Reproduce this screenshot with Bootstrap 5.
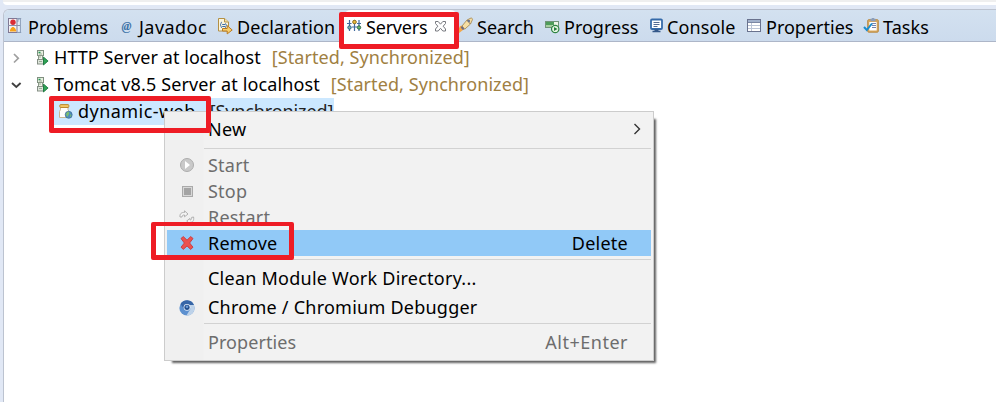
<!DOCTYPE html>
<html lang="en">
<head>
<meta charset="utf-8">
<title>Servers</title>
<link rel="stylesheet" href="https://cdn.jsdelivr.net/npm/bootstrap@5.3.0/dist/css/bootstrap.min.css">
<style>
html,body{height:402px;overflow:hidden}
body{background:#e1e8f5;font-family:"Noto Sans","Open Sans",sans-serif;font-size:18px;line-height:26px;color:#000}
svg{flex:none;overflow:visible}
.topstrip{height:5px;background:linear-gradient(#efefef 0 2px,#fff 2px 5px);margin-left:3px;border-bottom-left-radius:4px}
.view{margin:4px 0 0 3px;height:393px;border:1px solid #bcc3d0;border-right:0;border-bottom:0;border-top-left-radius:6px;background:#fff;overflow:hidden}
.tabs{height:32px;background:linear-gradient(#d3e1f0,#ccdbed);border-bottom:1px solid #adb6c8;padding-left:5px}
.tab-item{flex:none;height:31px;padding-top:4px;white-space:nowrap}
.tab-item>svg:first-child{margin:4px 3px 0 0}
.w1{width:111px}.w2{width:98px;letter-spacing:.45px}.w3{width:125px;letter-spacing:.1px}
.w4{width:115px;background:#fff;border-radius:8px 8px 0 0;padding-left:4px;height:32px;letter-spacing:-.2px}
.w5{width:87px}.w6{width:103px}.w7{width:99px;letter-spacing:.1px}.w8{width:117px}.w9{letter-spacing:.1px}
.close-x{margin:7px 0 0 8px}
.tree{padding:2px 0 0 8px}
.node{height:27px;line-height:27px;white-space:nowrap}
.state{color:#a08042;margin-left:11px;letter-spacing:.08px}
.srv{margin:0 5px 0 16px}
.http-name{letter-spacing:.05px}
.tomcat-name{letter-spacing:.13px}
.jar{margin:0 3px 0 5px}
.picked{background:#cce8ff;margin-left:42px;width:280px}
.picked .label-txt{letter-spacing:.45px}
.picked .state{color:#222;margin-left:14px;letter-spacing:-.12px}
.popup{left:164px;top:111px;width:490px;height:250px;border:1px solid #ccc;background:linear-gradient(90deg,#f0f0f0 38px,#f2f2f2 39px);box-shadow:5px 5px 2px -3px rgba(0,0,0,.62);padding:4px 2px 0;letter-spacing:.24px}
.entry{height:26px;padding:0 23px 0 12px;white-space:nowrap}
.entry .slot{width:16px;margin-right:13px;height:16px}
.has-sub{padding-right:10px}
.tall{height:29px;line-height:29px}
.off{color:#6d6d6d}
.hot{background:#91c9f7}
.prop-name{letter-spacing:.08px}
.keys{letter-spacing:.5px}
.rule{height:1px;background:#d2d2d2;margin-left:37px}
.r1{margin-top:6px;margin-bottom:3px}.r2{margin-top:3px;margin-bottom:4px}.r3{margin-top:1px;margin-bottom:4px}
.frame-red{border:5px solid #ee1c25;border-radius:2px}
.f1{left:339px;top:12px;width:120px;height:37px}
.f2{left:49px;top:96px;width:162px;height:37px}
.f3{left:151px;top:222px;width:143px;height:38px;border-top-width:4px}
</style>
<script src="https://cdn.jsdelivr.net/npm/bootstrap@5.3.0/dist/js/bootstrap.bundle.min.js"></script>
</head>
<body class="position-relative">
<svg width="0" height="0" class="position-absolute"><defs>
<symbol id="server" viewBox="0 0 13 16"><rect x="1.5" y=".5" width="6" height="5" fill="#e8efe0" stroke="#7f8f7f"/><rect x="2.5" y="5.5" width="4" height="4" fill="#eef2e6" stroke="#8b9a88"/><rect x="1.5" y="9.5" width="6" height="4.5" fill="#dfe5dc" stroke="#858f85"/><path d="M2.5 2.5h2" stroke="#1f9a55" stroke-width="1.5"/><path d="M3 4h3M3 7h2M3 11.5h3" stroke="#9cac98"/><path d="M7.5 7v8l4.6-4z" fill="#2fa354" stroke="#147238" stroke-width=".8"/></symbol>
</defs></svg>
<div class="topstrip"></div>
<main class="view">
  <nav class="tabs d-flex">
    <div class="tab-item d-flex w1"><svg width="16" height="16"><rect x="-.5" y=".5" width="8.5" height="14" fill="#f4f1f4" stroke="#817894"/><path d="M8 .5h4.2M8 14.5h4.2M8.8 4c0-2 .5-2.8 2.6-3.4v13.8H8.8" fill="#e5edf6" stroke="#8b9db8"/><path d="M-1 7.5h12" stroke="#8990a8"/><circle cx="4" cy="4.2" r="2.7" fill="#da2c35"/><path d="M.8 13.5c0-2 1.5-4.5 3.2-4.5s3.2 2.5 3.2 4.5z" fill="#f5a21b"/></svg><span>Problems</span></div>
    <div class="tab-item d-flex w2"><svg width="16" height="16"><text x="1.5" y="12" font-family="Liberation Serif,serif" font-style="italic" font-weight="bold" font-size="12" fill="#3d73a8" letter-spacing="0">@</text></svg><span>Javadoc</span></div>
    <div class="tab-item d-flex w3"><svg width="16" height="16"><path d="M.5.5h6l4 3.5v9h-10z" fill="#fbf5dd" stroke="#b39045"/><path d="M6.5.5v3.5h4" fill="#f3e1a8" stroke="#b39045"/><path d="M4 4c-1.4 0-.5 2.5-2 2.8 1.5.3.6 3 2 3M7 5.5c1.3 0 .4 1.5 1.6 1.7-1.2.2-.3 2.6-1.6 2.6M4.2 6.5h3M4.2 8.5h3" fill="none" stroke="#3c6da8"/><path d="M4.5 10.5h4.7V7.6l5 4.4-5 3.9V13H4.5z" fill="#f8cf6d" stroke="#b97a22"/></svg><span>Declaration</span></div>
    <div class="tab-item d-flex w4"><svg width="16" height="16"><path d="M2.5 2v11M7.5 2v11M12 2v11M0 5.5h4.5M5 9h5M10 5.5h4" fill="none" stroke="#416b9e" stroke-width="1.2"/><circle cx="2.5" cy="9.5" r="1.7" fill="#82b8a0" stroke="#275f8a"/><circle cx="7.5" cy="4" r="1.8" fill="#eebd3b" stroke="#8f711c"/><circle cx="12" cy="9.5" r="1.7" fill="#6dbb64" stroke="#2c6c50"/></svg><span>Servers</span><svg width="11" height="11" viewBox="0 0 11 11" class="close-x"><path d="M.5.5h2.7l2.3 2.7L7.8.5h2.7v2L8.2 5.2l2.3 2.8v2H7.8L5.5 7.3 3.2 10H.5V8l2.3-2.8L.5 2.5z" fill="#fff" stroke="#77797f"/></svg></div>
    <div class="tab-item d-flex w5"><svg width="16" height="16"><path d="M2 8l3.5-.5 2 2.5-2.5 2-4.6 3.5C1 13-.5 13 2 8z" fill="#f2a84b"/><path d="M4 8L9 2l4-2c1 0 1.7.8 1.4 1.8L12.5 6l-5.8 5.2z" fill="#f6dea3" stroke="#a98d58" stroke-width=".9"/><path d="M4 8l2.5 3-1.6 1-2.3-2.5z" fill="#6c6b86"/><path d="M9 2l3.3 4" stroke="#8c7a62"/><circle cx="10.8" cy="3" r="1.3" fill="#6e7489"/></svg><span>Search</span></div>
    <div class="tab-item d-flex w6"><svg width="16" height="16"><rect x=".5" y="3.5" width="13" height="6" fill="#eef6e8" stroke="#719479"/><path d="M1 4h8v3H1z" fill="#4e9c5a"/><path d="M1 7h6v2H1z" fill="#a5cf9e"/><circle cx="10.2" cy="11" r="3.7" fill="#e7f5e3" stroke="#2f8443" stroke-width="1.2"/><path d="M9 8.9v4.2l3.5-2.1z" fill="#26803d"/></svg><span>Progress</span></div>
    <div class="tab-item d-flex w7"><svg width="16" height="16"><rect x="3" y="1.5" width="11" height="9.5" rx="1" fill="#fff" stroke="#356aa9" stroke-width="1.8"/><path d="M5.5 4.5h6M5.5 6.5h6M5.5 8.5h4" stroke="#526a93"/><path d="M6.5 12h4M4.5 13.5h8" stroke="#345889" stroke-width="1.4"/></svg><span>Console</span></div>
    <div class="tab-item d-flex w8"><svg width="16" height="16"><rect x=".5" y="1.5" width="13" height="12" fill="#fff" stroke="#69728e"/><path d="M1 2h12v2H1z" fill="#a1b1cc"/><path d="M4.5 4v9M1 7.5h12M1 10.5h12" stroke="#bbc5d7"/><path d="M1 4.5h12" stroke="#7b87a3"/></svg><span>Properties</span></div>
    <div class="tab-item d-flex w9"><svg width="16" height="16"><rect x="3.7" y="1.7" width="10.6" height="12.5" rx="1" fill="#d8a85e" stroke="#b98b47"/><path d="M5.3 4h7.4v8.6H5.3z" fill="#fff"/><path d="M6.5.8h1.3V0h2.4v.8h1.3v2.5h-5z" fill="#8c9eb9"/><path d="M8 5.5h4M8 7.5h4M8 9.5h4" stroke="#7685ad"/><path d="M0 9l2.8 3L8 5.5" fill="none" stroke="#188cd0" stroke-width="2"/></svg><span>Tasks</span></div>
  </nav>
  <section class="tree">
    <div class="node d-flex align-items-center"><svg width="8" height="10"><path d="M2 1l4.3 4.3L2 9.5" fill="none" stroke="#a0a0a0" stroke-width="1.7"/></svg><svg class="srv" width="13" height="16"><use href="#server"/></svg><span class="http-name">HTTP Server at localhost</span><span class="state">[Started, Synchronized]</span></div>
    <div class="node d-flex align-items-center"><svg width="8" height="10"><path d="M0 3l4.3 4 4.3-4" fill="none" stroke="#404040" stroke-width="1.9"/></svg><svg class="srv" width="13" height="16"><use href="#server"/></svg><span class="tomcat-name">Tomcat v8.5 Server at localhost</span><span class="state">[Started, Synchronized]</span></div>
    <div class="node d-flex align-items-center picked"><svg width="16" height="16" class="jar"><path d="M1.5 3.5h7.5v2l1 2v6h-9.5v-6l1-2z" fill="#fffefb" stroke="#c8b791"/><rect x=".8" y=".6" width="9" height="2.9" rx=".8" fill="#f2c662" stroke="#ba8a31"/><circle cx="9.7" cy="10.8" r="3.5" fill="#4d8dbd" stroke="#3b6b91" stroke-width=".7"/><path d="M7 10c1-3 4.5-2.5 3 0s-1 3-2.2 2.2zM11.5 10l1 1.5-1.6 1.8z" fill="#7cbf6b"/></svg><span class="label-txt">dynamic-web</span><span class="state">[Synchronized]</span></div>
  </section>
</main>
<div class="popup position-absolute">
  <div class="entry has-sub d-flex align-items-center"><span class="slot"></span><span>New</span><svg class="ms-auto" width="8" height="12"><path d="M1.5 1l5 5-5 5" fill="none" stroke="#333" stroke-width="1.4"/></svg></div>
  <div class="rule r1"></div>
  <div class="entry d-flex align-items-center off"><svg class="slot" width="16" height="16"><circle cx="8" cy="8" r="6.5" fill="#c9c9c9" stroke="#adadad"/><path d="M6 4v8l5-4z" fill="#fff"/></svg><span>Start</span></div>
  <div class="entry d-flex align-items-center off"><svg class="slot" width="16" height="16"><rect x="3.5" y="3.5" width="10" height="10" fill="#d8d8d8" stroke="#aaa"/><rect x="5" y="5" width="7" height="7" fill="#a4a4a4"/></svg><span>Stop</span></div>
  <div class="entry d-flex align-items-center off"><svg class="slot" width="16" height="16"><path d="M1 8c-.5-3 1.5-5 4.5-4.5V1.8L9 5 5.5 7.8V6C4 5.8 3 6.5 3 8zM14.6 8c.5 4-1 5.5-3.6 5.3v1.5L7.7 12 11 9.4v1.5c1.3.2 1.8-.8 1.6-2.5z" fill="#f4f4f4" stroke="#b0b0b0"/></svg><span>Restart</span></div>
  <div class="entry d-flex align-items-center hot"><svg class="slot" width="16" height="16"><path d="M2 3.5L4.3 1.6 8 5.2l3.7-3.6L14 3.5 10.6 8l3.4 4.2-2.3 2.2L8 10.9l-3.7 3.5L2 12.2 5.4 8z" fill="#ec514e" stroke="#cb3f44" stroke-linejoin="round"/></svg><span>Remove</span><span class="ms-auto">Delete</span></div>
  <div class="rule r2"></div>
  <div class="entry d-flex align-items-center tall"><span class="slot"></span><span>Clean Module Work Directory...</span></div>
  <div class="entry d-flex align-items-center tall"><svg class="slot" width="16" height="16"><circle cx="8" cy="8" r="7.6" fill="#5c90cf"/><path d="M1.5 4A7.6 7.6 0 0 1 15 5H8L5 9z" fill="#3766a7"/><path d="M15 5a7.6 7.6 0 0 1-7.6 10.6L11.4 9 10 5z" fill="#bdd2e9"/><circle cx="8" cy="7.3" r="3.4" fill="#e4eef9"/><circle cx="8" cy="7.3" r="2.6" fill="#244f8d"/><circle cx="8" cy="6.8" r="1.3" fill="#6b9bd5"/></svg><span>Chrome / Chromium Debugger</span></div>
  <div class="rule r3"></div>
  <div class="entry d-flex align-items-center off tall"><span class="slot"></span><span class="prop-name">Properties</span><span class="ms-auto keys">Alt+Enter</span></div>
</div>
<div class="frame-red position-absolute f1"></div>
<div class="frame-red position-absolute f2"></div>
<div class="frame-red position-absolute f3"></div>
</body>
</html>
